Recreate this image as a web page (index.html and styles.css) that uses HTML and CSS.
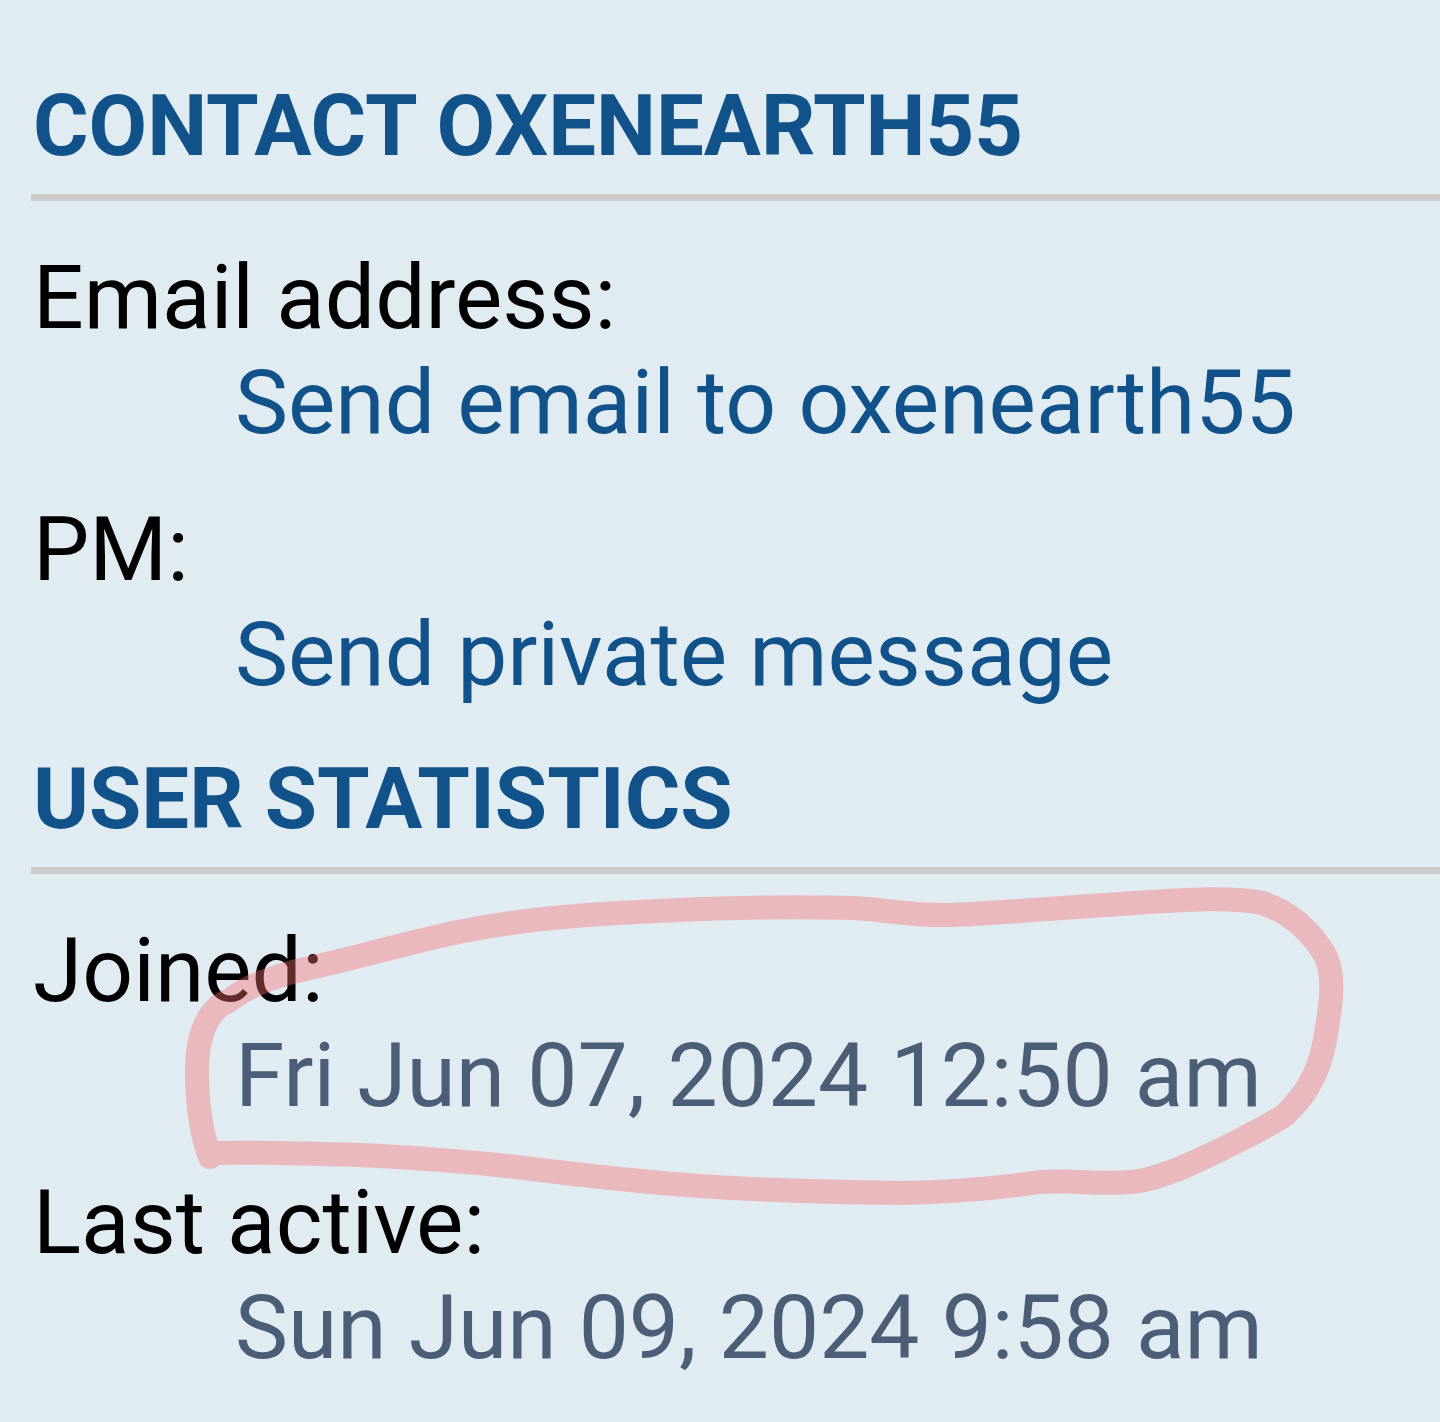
FILE: index.html
```html
<!DOCTYPE html>
<html lang="en">
<head>
<meta charset="utf-8">
<link rel="stylesheet" href="styles.css">
<title>Profile</title>
</head>
<body>
<div class="page">
  <section class="panel">
    <h3 class="panel-title">Contact oxenearth55</h3>
    <dl class="details">
      <div class="item">
        <dt>Email address:</dt>
        <dd><a href="#">Send email to oxenearth55</a></dd>
      </div>
      <div class="item">
        <dt>PM:</dt>
        <dd><a href="#">Send private message</a></dd>
      </div>
    </dl>
  </section>
  <section class="panel">
    <h3 class="panel-title">User statistics</h3>
    <dl class="details">
      <div class="item">
        <dt>Joined:</dt>
        <dd class="date">Fri Jun 07, 2024 12:50 am</dd>
      </div>
      <div class="item">
        <dt>Last active:</dt>
        <dd class="date">Sun Jun 09, 2024 9:58 am</dd>
      </div>
    </dl>
  </section>
  <svg class="scribble" width="1440" height="1422" viewBox="0 0 1440 1422" aria-hidden="true">
    <path d="M210 1157 C200 1130 197 1100 197 1070 C197 1040 205 1010 230 1000 C250 985 270 978 300 970 C340 962 380 950 440 936 C500 922 560 916 620 913 C700 908 780 906 854 908 C890 910 910 916 950 915 C1000 913 1060 908 1120 904 C1180 900 1230 896 1262 903 C1290 912 1310 930 1325 955 C1335 975 1332 1000 1325 1040 C1318 1080 1300 1100 1285 1115 C1270 1125 1250 1135 1230 1145 C1200 1160 1160 1180 1130 1182 C1095 1185 1080 1180 1040 1182 C1000 1188 960 1192 900 1193 C820 1192 760 1190 700 1186 C640 1182 590 1176 540 1170 C480 1162 420 1158 360 1155 C300 1153 250 1152 212 1153" />
  </svg>
</div>
</body>
</html>
```

FILE: styles.css
```css
html, body {
  margin: 0;
  padding: 0;
  background: #e1ebf2;
}

.page {
  position: relative;
  width: 1440px;
  height: 1422px;
  overflow: hidden;
  padding: 76px 0 0 31px;
  box-sizing: border-box;
  font-family: Roboto, "Liberation Sans", sans-serif;
}

.panel {
  display: flex;
  flex-direction: column;
}

.panel-title {
  margin: 0;
  padding: 0 0 18px 2px;
  font-size: 85px;
  line-height: 100px;
  font-weight: 700;
  text-transform: uppercase;
  color: #105289;
  border-bottom: 7px solid #cbcbcb;
}

.details {
  margin: 44px 0 42px 0;
  display: flex;
  flex-direction: column;
  gap: 42px;
}

.item {
  display: flex;
  flex-direction: column;
}

.details dt,
.details dd {
  margin: 0;
  font-size: 89.3px;
  line-height: 105px;
}

.details dt {
  color: #000;
  padding-left: 2px;
}

.details dd {
  padding-left: 204px;
}

.details dd a {
  color: #105289;
  text-decoration: none;
}

.details dd.date {
  color: #4c5d77;
}

.scribble {
  position: absolute;
  left: 0;
  top: 0;
  pointer-events: none;
}

.scribble path {
  fill: none;
  stroke: rgba(245, 110, 110, 0.4);
  stroke-width: 24;
  stroke-linecap: round;
  stroke-linejoin: round;
}
```
